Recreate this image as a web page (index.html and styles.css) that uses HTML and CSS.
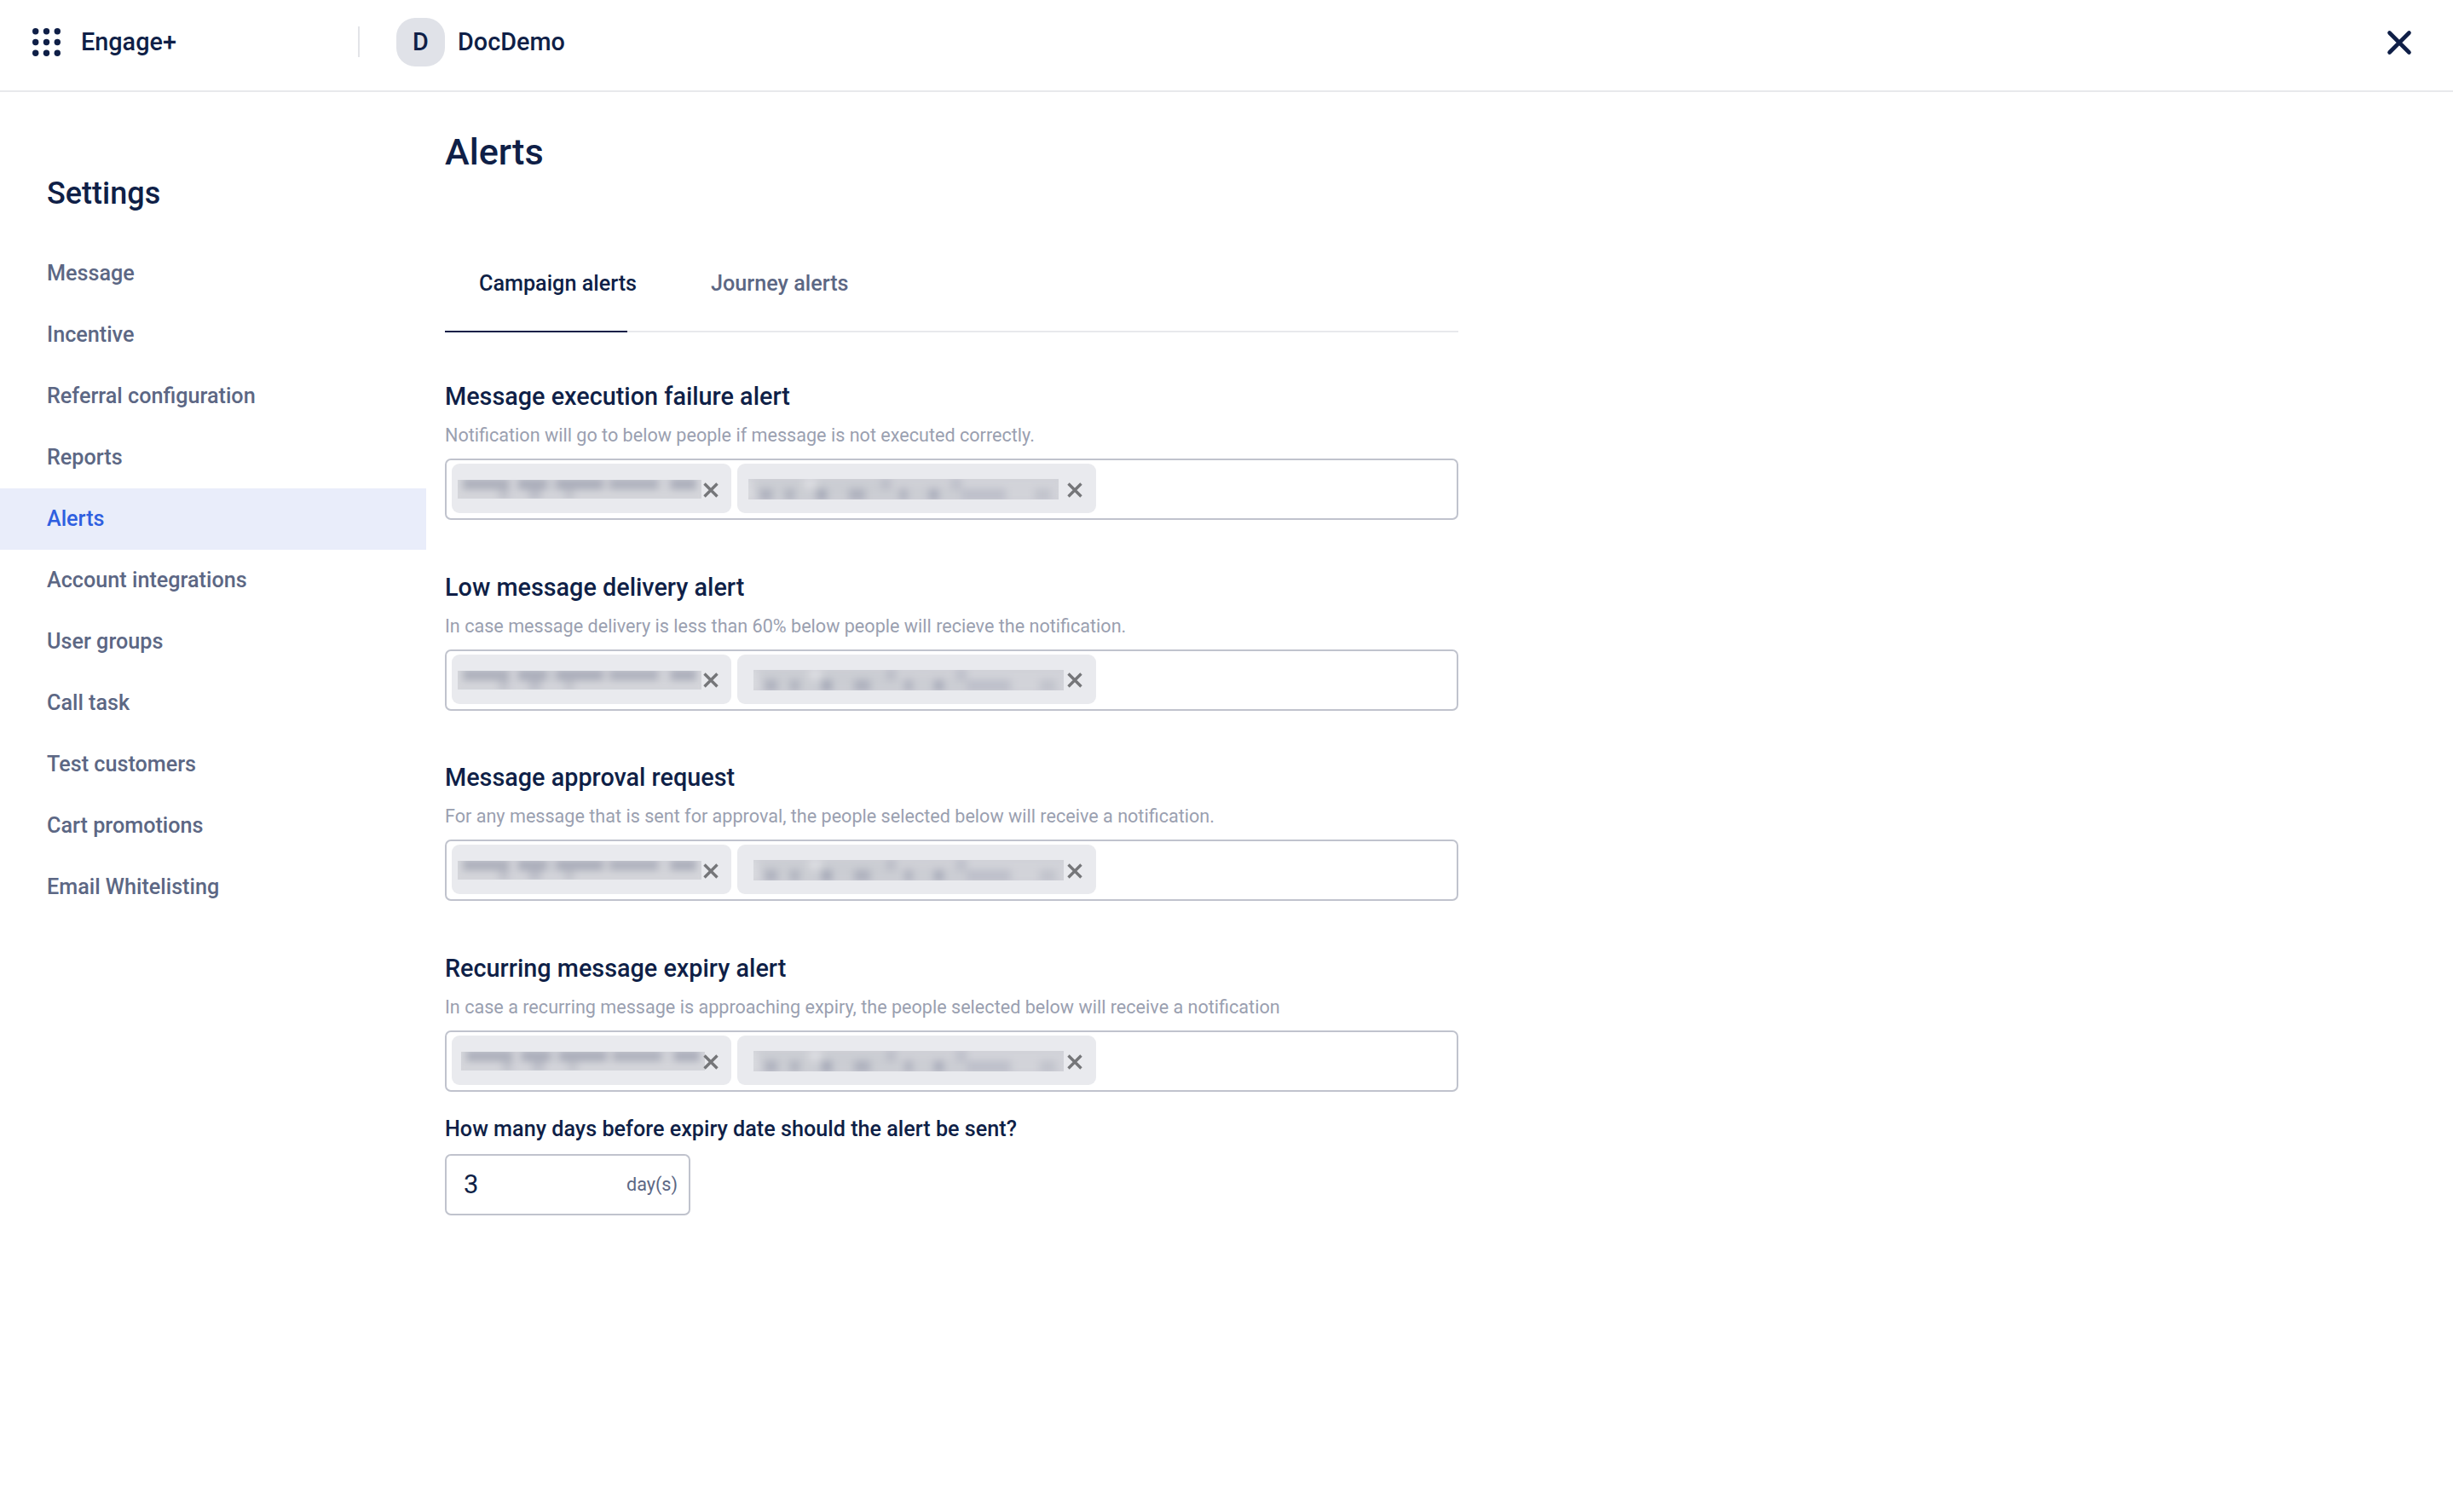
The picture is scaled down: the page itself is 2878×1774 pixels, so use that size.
FILE: index.html
```html
<!DOCTYPE html>
<html lang="en">
<head>
    <meta charset="UTF-8">
    <title>Alerts</title>
    <link rel="stylesheet" href="styles.css">
</head>
<body>
<div class="topbar">
    <svg class="apps" width="33" height="33" viewBox="0 0 33 33" fill="#0f1f47">
        <circle cx="3.7" cy="3.7" r="3.7"/><circle cx="16.5" cy="3.7" r="3.7"/><circle cx="29.3" cy="3.7" r="3.7"/>
        <circle cx="3.7" cy="16.5" r="3.7"/><circle cx="16.5" cy="16.5" r="3.7"/><circle cx="29.3" cy="16.5" r="3.7"/>
        <circle cx="3.7" cy="29.3" r="3.7"/><circle cx="16.5" cy="29.3" r="3.7"/><circle cx="29.3" cy="29.3" r="3.7"/>
    </svg>
    <div class="product">Engage+</div>
    <div class="sep"></div>
    <div class="avatar">D</div>
    <div class="account">DocDemo</div>
    <svg class="close" width="30" height="30" viewBox="0 0 30 30">
        <path d="M3.5 3.5 L26.5 26.5 M26.5 3.5 L3.5 26.5" stroke="#0f1f47" stroke-width="4.6" stroke-linecap="round"/>
    </svg>
</div>
<div class="main">
    <div class="sidebar">
        <h2>Settings</h2>
        <ul class="nav">
            <li>Message</li>
            <li>Incentive</li>
            <li>Referral configuration</li>
            <li>Reports</li>
            <li class="current">Alerts</li>
            <li>Account integrations</li>
            <li>User groups</li>
            <li>Call task</li>
            <li>Test customers</li>
            <li>Cart promotions</li>
            <li>Email Whitelisting</li>
        </ul>
    </div>
    <div class="content">
        <h1>Alerts</h1>
        <div class="tabs">
            <div class="tab current">Campaign alerts</div>
            <div class="tab">Journey alerts</div>
        </div>

        <div class="alert">
            <h3>Message execution failure alert</h3>
            <p>Notification will go to below people if message is not executed correctly.</p>
            <div class="chips">
                <div class="chip one"><div class="smudge"></div><svg class="x" viewBox="0 0 18 18"><path d="M1.5 1.5 L16.5 16.5 M16.5 1.5 L1.5 16.5"/></svg></div>
                <div class="chip two"><div class="smudge"></div><svg class="x" viewBox="0 0 18 18"><path d="M1.5 1.5 L16.5 16.5 M16.5 1.5 L1.5 16.5"/></svg></div>
            </div>
        </div>

        <div class="alert">
            <h3>Low message delivery alert</h3>
            <p>In case message delivery is less than 60% below people will recieve the notification.</p>
            <div class="chips">
                <div class="chip one"><div class="smudge"></div><svg class="x" viewBox="0 0 18 18"><path d="M1.5 1.5 L16.5 16.5 M16.5 1.5 L1.5 16.5"/></svg></div>
                <div class="chip two"><div class="smudge"></div><svg class="x" viewBox="0 0 18 18"><path d="M1.5 1.5 L16.5 16.5 M16.5 1.5 L1.5 16.5"/></svg></div>
            </div>
        </div>

        <div class="alert">
            <h3>Message approval request</h3>
            <p>For any message that is sent for approval, the people selected below will receive a notification.</p>
            <div class="chips">
                <div class="chip one"><div class="smudge"></div><svg class="x" viewBox="0 0 18 18"><path d="M1.5 1.5 L16.5 16.5 M16.5 1.5 L1.5 16.5"/></svg></div>
                <div class="chip two"><div class="smudge"></div><svg class="x" viewBox="0 0 18 18"><path d="M1.5 1.5 L16.5 16.5 M16.5 1.5 L1.5 16.5"/></svg></div>
            </div>
        </div>

        <div class="alert expiry">
            <h3>Recurring message expiry alert</h3>
            <p>In case a recurring message is approaching expiry, the people selected below will receive a notification</p>
            <div class="chips">
                <div class="chip one"><div class="smudge"></div><svg class="x" viewBox="0 0 18 18"><path d="M1.5 1.5 L16.5 16.5 M16.5 1.5 L1.5 16.5"/></svg></div>
                <div class="chip two"><div class="smudge"></div><svg class="x" viewBox="0 0 18 18"><path d="M1.5 1.5 L16.5 16.5 M16.5 1.5 L1.5 16.5"/></svg></div>
            </div>
        </div>

        <div class="question">How many days before expiry date should the alert be sent?</div>
        <div class="days">
            <span class="value">3</span>
            <span class="unit">day(s)</span>
        </div>
    </div>
</div>
</body>
</html>
```

FILE: styles.css
```css
body,div,ul,li,h1,h2,h3,p{margin:0;padding:0;}
ul{list-style-type:none;}
body{background:#fff;color:#0f1f47;font:400 25.2px/1.2 Roboto,"Liberation Sans",sans-serif;}

.topbar{display:flex;align-items:center;height:106px;border-bottom:2px solid #e8e9ec;padding:0 38px;}
.apps{flex:none;margin-top:-7px;}
.product{width:325px;margin-left:24px;font-size:28.8px;font-weight:500;margin-top:-7px;}
.sep{width:2px;height:36px;background:#e3e4e8;margin-top:-9px;}
.avatar{width:57px;height:57px;margin-left:43px;margin-top:-7px;background:#e0e2e8;border-radius:22px;display:flex;align-items:center;justify-content:center;font-size:28.8px;font-weight:500;}
.account{margin-left:15px;font-size:28.8px;font-weight:500;margin-top:-7px;}
.close{margin-left:auto;margin-right:10px;margin-top:-7px;}

.main{display:flex;}
.sidebar{width:500px;flex:none;padding-top:97px;}
.sidebar h2{font-size:36px;font-weight:500;line-height:44px;padding-left:55px;margin-bottom:36px;}
.nav li{height:72px;line-height:72px;padding-left:55px;font-weight:500;color:#5c6784;}
.nav li.current{background:#e9edfa;color:#2f5fe0;}

.content{width:1189px;margin-left:22px;padding-top:45px;}
.content h1{font-size:43.2px;font-weight:500;line-height:52px;}
.tabs{display:flex;margin-top:71px;border-bottom:2px solid #e8e9ec;height:114px;box-sizing:border-box;}
.tab{line-height:113px;height:114px;box-sizing:border-box;font-weight:500;color:#5c6784;white-space:nowrap;}
.tab.current{width:214px;padding-left:40px;color:#0f1f47;border-bottom:2px solid #0f1f47;margin-right:98px;}

.alert{margin-top:60.7px;}
.tabs + .alert{margin-top:57px;}
.alert h3{font-size:28.8px;font-weight:500;line-height:36px;}
.alert p{font-size:21.6px;line-height:26px;margin-top:15px;color:#9aa0b0;}
.chips{display:flex;gap:7px;margin-top:14px;height:72px;box-sizing:border-box;border:2px solid #c0c3cd;border-radius:7px;padding:4px 6px;}
.chip{height:58px;display:flex;align-items:center;box-sizing:border-box;background:#e9eaee;border-radius:9px;}
.chip.one{width:328px;padding-left:7px;}
.chip.two{width:421px;padding-left:13px;}
.smudge{height:22px;margin-top:2px;position:relative;overflow:hidden;background:#d4d5da;}
.smudge::before{content:"";position:absolute;left:-6px;right:-6px;top:-6px;bottom:-6px;filter:blur(4px);}
.chip.one .smudge{width:286px;}
.chip.two .smudge{width:364px;height:24px;background:#cfd0d6;}
.chip.two .smudge::before{filter:blur(5px);}
.chip.one .smudge::before{background:linear-gradient(90deg,#d6d7dc 0 4%,#abaeba 4% 22%,#d0d1d7 22% 26%,#a9acb9 26% 37%,#c8cad1 37% 41%,#a9acb9 41% 59%,#c9cad1 59% 62%,#adb0bc 62% 81%,#d0d1d7 81% 86%,#a9acb9 86% 96%,#d6d7dc 96%) top 5px left 0/100% 12px no-repeat,linear-gradient(90deg,#d4d5da 0 18%,#bfc1ca 18% 22%,#d2d3d9 22% 30%,#bcbec8 30% 35%,#d2d3d9 35% 44%,#c2c4cc 44% 48%,#d4d5da 48%) bottom 5px left 0/100% 12px no-repeat;}
.chip.two .smudge::before{background:linear-gradient(90deg,#dadbe0 0 3%,#cbcdd3 3% 19%,#dcdde1 19% 23%,#cbcdd3 23% 43%,#b9bbc6 43% 46%,#cfd0d6 46% 65%,#bcbec9 65% 68%,#d2d3d9 68% 100%) top 5px left 0/100% 13px no-repeat,linear-gradient(90deg,#dadbe0 0 3%,#d0d1d7 3% 5%,#acafbc 5% 9%,#cbcdd3 9% 13%,#aeb1bd 13% 16%,#cbcdd3 16% 23%,#a2a6b5 23% 26%,#cbcdd3 26% 33%,#acafbc 33% 38%,#cbcdd3 38% 49%,#a8abb9 49% 51%,#cbcdd3 51% 58%,#a6a9b8 58% 61%,#cbcdd3 61% 68%,#bcbec9 68% 82%,#d2d3d9 82% 91%,#c0c2cb 91% 96%,#d2d3d9 96%) bottom 5px left 0/100% 13px no-repeat;}
.alert ~ .alert .chip.two .smudge{transform:translateX(6px);}
.alert.expiry .chip.one .smudge{transform:translateX(4px);}
.x{flex:none;width:18px;height:18px;margin-left:2px;margin-top:3px;position:relative;}
.x path{stroke:#757679;stroke-width:3.4;fill:none;}
.chip.two .x{margin-left:10px;}

.question{font-weight:500;line-height:32px;margin-top:28px;}
.days{width:288px;height:72px;margin-top:13px;box-sizing:border-box;border:2px solid #c0c3cd;border-radius:7px;display:flex;align-items:center;justify-content:space-between;padding:0 13px 0 20px;}
.value{font-size:31px;}
.unit{font-size:21.6px;color:#5c6784;}
```
